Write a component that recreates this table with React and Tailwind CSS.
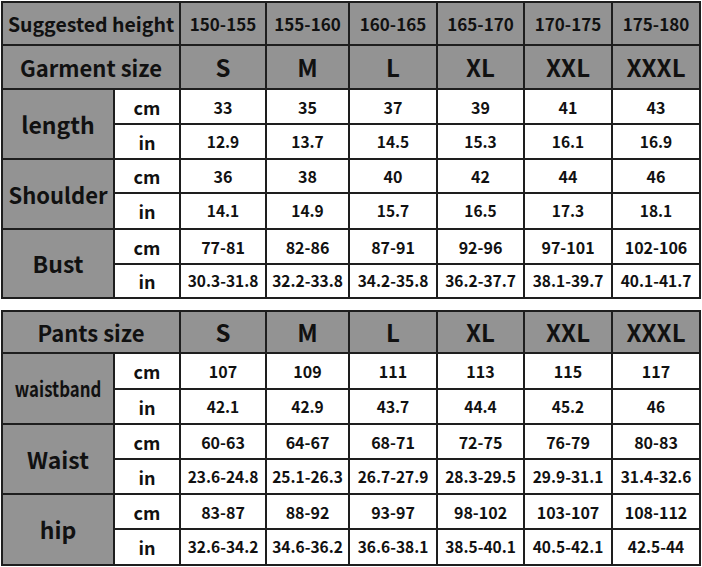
import React from 'react';

const sizes = ['S', 'M', 'L', 'XL', 'XXL', 'XXXL'];
const heights = ['150-155', '155-160', '160-165', '165-170', '170-175', '175-180'];

const top = [
  { label: 'length', cm: ['33', '35', '37', '39', '41', '43'], inch: ['12.9', '13.7', '14.5', '15.3', '16.1', '16.9'], h: ['h-[35px]', 'h-[35px]'] },
  { label: 'Shoulder', fs: 'text-[22px]', cm: ['36', '38', '40', '42', '44', '46'], inch: ['14.1', '14.9', '15.7', '16.5', '17.3', '18.1'], h: ['h-[34px]', 'h-[36px]'] },
  { label: 'Bust', cm: ['77-81', '82-86', '87-91', '92-96', '97-101', '102-106'], inch: ['30.3-31.8', '32.2-33.8', '34.2-35.8', '36.2-37.7', '38.1-39.7', '40.1-41.7'], h: ['h-[35px]', 'h-[34px]'] },
];

const pants = [
  { label: 'waistband', small: true, cm: ['107', '109', '111', '113', '115', '117'], inch: ['42.1', '42.9', '43.7', '44.4', '45.2', '46'], h: ['h-[36px]', 'h-[35px]'] },
  { label: 'Waist', cm: ['60-63', '64-67', '68-71', '72-75', '76-79', '80-83'], inch: ['23.6-24.8', '25.1-26.3', '26.7-27.9', '28.3-29.5', '29.9-31.1', '31.4-32.6'], h: ['h-[35px]', 'h-[35px]'] },
  { label: 'hip', cm: ['83-87', '88-92', '93-97', '98-102', '103-107', '108-112'], inch: ['32.6-34.2', '34.6-36.2', '36.6-38.1', '38.5-40.1', '40.5-42.1', '42.5-44'], h: ['h-[35px]', 'h-[36px]'] },
];

const cell = 'border-2 border-[#1e1e1e] text-center align-middle p-0';
const gray = 'bg-[#939393]';

function Cols() {
  return (
    <colgroup>
      <col className="w-[112px]" />
      <col className="w-[66px]" />
      <col className="w-[86px]" />
      <col className="w-[83px]" />
      <col className="w-[88px]" />
      <col className="w-[87px]" />
      <col className="w-[88px]" />
      <col className="w-[88px]" />
    </colgroup>
  );
}

function Body({ rows }) {
  return rows.map((r) => (
    <React.Fragment key={r.label}>
      <tr className={r.h[0]}>
        <td rowSpan={2} className={`${cell} ${gray} ${r.small ? 'text-[21px]' : r.fs || 'text-[23px]'}`}>
          <span className={r.small ? 'inline-block scale-x-[0.8]' : ''}>{r.label}</span>
        </td>
        <td className={`${cell} text-[18px]`}>cm</td>
        {r.cm.map((v, i) => (
          <td key={i} className={`${cell} text-[16px]`}>{v}</td>
        ))}
      </tr>
      <tr className={r.h[1]}>
        <td className={`${cell} text-[18px]`}>in</td>
        {r.inch.map((v, i) => (
          <td key={i} className={`${cell} text-[15.5px]`}>{v}</td>
        ))}
      </tr>
    </React.Fragment>
  ));
}

export default function App() {
  return (
    <div className="w-[702px] h-[567px] bg-white pl-[1px] pt-[1px] font-['Noto_Sans_CJK_SC','Noto_Sans',sans-serif] font-bold text-[#111] leading-none">
      {/* 上衣尺码表 */}
      <table className="w-[700px] table-fixed border-collapse">
        <Cols />
        <tbody>
          <tr className="h-[43px]">
            <td colSpan={2} className={`${cell} ${gray} text-[19.5px]`}>Suggested height</td>
            {heights.map((v) => (
              <td key={v} className={`${cell} ${gray} text-[17px]`}>{v}</td>
            ))}
          </tr>
          <tr className="h-[44px]">
            <td colSpan={2} className={`${cell} ${gray} text-[22px]`}>Garment size</td>
            {sizes.map((v) => (
              <td key={v} className={`${cell} ${gray} text-[24px]`}>{v}</td>
            ))}
          </tr>
          <Body rows={top} />
        </tbody>
      </table>

      {/* 裤子尺码表 */}
      <table className="w-[700px] table-fixed border-collapse mt-[11px]">
        <Cols />
        <tbody>
          <tr className="h-[42px]">
            <td colSpan={2} className={`${cell} ${gray} text-[22px]`}>Pants size</td>
            {sizes.map((v) => (
              <td key={v} className={`${cell} ${gray} text-[24px]`}>{v}</td>
            ))}
          </tr>
          <Body rows={pants} />
        </tbody>
      </table>
    </div>
  );
}
